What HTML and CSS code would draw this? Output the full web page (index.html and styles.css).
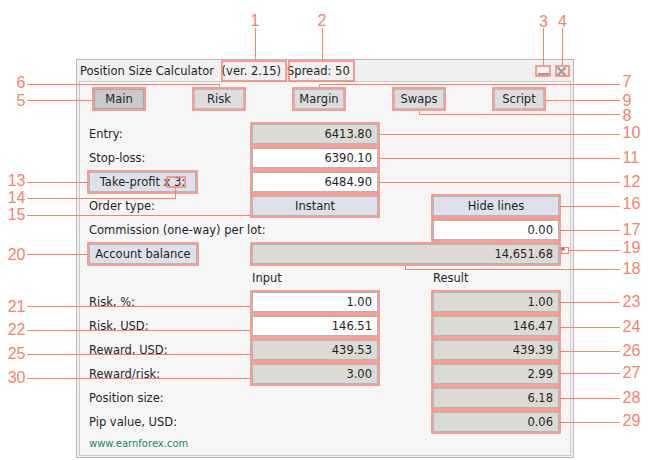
FILE: index.html
```html
<!DOCTYPE html>
<html>
<head>
<meta charset="utf-8">
<title>Position Size Calculator</title>
<link rel="stylesheet" href="styles.css">
</head>
<body>
<div class="window">
  <div class="titlebar">
    <span class="title">Position Size Calculator</span>
    <span class="ver">(ver. 2.15)</span>
    <span class="spread">Spread: 50</span>
    <div class="winbtns">
      <svg class="wicon" width="12" height="13" viewBox="0 0 12 13"><rect class="wglyph" x="1" y="9" width="11" height="2"/></svg>
      <svg class="wicon" width="12" height="13" viewBox="0 0 12 13"><path class="wx" d="M1.5 3.5L9.5 11.5M9.5 3.5L1.5 11.5"/></svg>
    </div>
  </div>
  <div class="panel">
    <div class="tabs">
      <div class="tab active">Main</div>
      <div class="tab">Risk</div>
      <div class="tab">Margin</div>
      <div class="tab">Swaps</div>
      <div class="tab">Script</div>
    </div>
    <div class="form">
      <div class="lbl c1">Entry:</div>
      <div class="fld ro c2">6413.80</div>

      <div class="lbl c1">Stop-loss:</div>
      <div class="fld c2">6390.10</div>

      <div class="btn c1 tp">Take-profit x 3:</div>
      <div class="fld c2">6484.90</div>

      <div class="lbl c1">Order type:</div>
      <div class="btn c2">Instant</div>
      <div class="btn c4">Hide lines</div>

      <div class="lbl c13">Commission (one-way) per lot:</div>
      <div class="fld c4">0.00</div>

      <div class="btn c1 ab">Account balance</div>
      <div class="fld ro c24 bal">14,651.68<span class="star">*</span></div>

      <div class="head c2">Input</div>
      <div class="head c4">Result</div>

      <div class="lbl c1">Risk, %:</div>
      <div class="fld c2">1.00</div>
      <div class="fld ro c4">1.00</div>

      <div class="lbl c1">Risk, USD:</div>
      <div class="fld c2">146.51</div>
      <div class="fld ro c4">146.47</div>

      <div class="lbl c1">Reward, USD:</div>
      <div class="fld ro c2">439.53</div>
      <div class="fld ro c4">439.39</div>

      <div class="lbl c1">Reward/risk:</div>
      <div class="fld ro c2">3.00</div>
      <div class="fld ro c4">2.99</div>

      <div class="lbl c1">Position size:</div>
      <div class="fld ro c4">6.18</div>

      <div class="lbl c1">Pip value, USD:</div>
      <div class="fld ro c4">0.06</div>
    </div>
    <div class="link">www.earnforex.com</div>
  </div>
</div>

<svg class="callouts" width="650" height="460" viewBox="0 0 650 460">
  <g class="boxes">
    <rect x="222" y="61" width="64" height="20"/>
    <rect x="289" y="61" width="65" height="20"/>
    <rect x="536" y="66" width="14" height="10"/>
    <rect x="556" y="66" width="13" height="10"/>
    <rect x="93" y="88" width="52" height="22"/>
    <rect x="193" y="88" width="52" height="22"/>
    <rect x="293" y="88" width="52" height="22"/>
    <rect x="393" y="88" width="52" height="22"/>
    <rect x="493" y="88" width="52" height="22"/>
    <rect x="251" y="123" width="128" height="22"/>
    <rect x="251" y="147" width="128" height="22"/>
    <rect x="251" y="171" width="128" height="22"/>
    <rect x="251" y="195" width="128" height="22"/>
    <rect x="88" y="171" width="109" height="22"/>
    <rect x="167" y="177" width="18" height="10"/>
    <rect x="432" y="195" width="128" height="22"/>
    <rect x="432" y="219" width="128" height="22"/>
    <rect x="251" y="243" width="309" height="22"/>
    <rect class="thin" x="561.5" y="247.5" width="7" height="6"/>
    <rect x="88" y="243" width="110" height="22"/>
    <rect x="251" y="291" width="128" height="22"/>
    <rect x="251" y="315" width="128" height="22"/>
    <rect x="251" y="339" width="128" height="22"/>
    <rect x="251" y="363" width="128" height="22"/>
    <rect x="432" y="291" width="128" height="22"/>
    <rect x="432" y="315" width="128" height="22"/>
    <rect x="432" y="339" width="128" height="22"/>
    <rect x="432" y="363" width="128" height="22"/>
    <rect x="432" y="387" width="128" height="22"/>
    <rect x="432" y="411" width="128" height="22"/>
  </g>
  <g class="leads">
    <path d="M255.5 28V60"/>
    <path d="M322.5 28V60"/>
    <path d="M543.5 28V65"/>
    <path d="M562.5 28V65"/>
    <path d="M27 100.5H92"/>
    <path d="M27 84.5H219.5V87"/>
    <path d="M319.5 87V84.5H620"/>
    <path d="M419.5 111V114.5H620"/>
    <path d="M546 100.5H620"/>
    <path d="M379 134.5H620"/>
    <path d="M379 158.5H620"/>
    <path d="M379 182.5H620"/>
    <path d="M27 182.5H87"/>
    <path d="M175.5 188V198.5H27"/>
    <path d="M27 215.5H250"/>
    <path d="M560 206.5H620"/>
    <path d="M560 230.5H620"/>
    <path d="M405.5 266V269.5H620"/>
    <path d="M569 250.5H620"/>
    <path d="M27 254.5H87"/>
    <path d="M27 306.5H250"/>
    <path d="M27 330.5H250"/>
    <path d="M560 302.5H620"/>
    <path d="M560 327.5H620"/>
    <path d="M27 354.5H250"/>
    <path d="M560 351.5H620"/>
    <path d="M560 373.5H620"/>
    <path d="M560 398.5H620"/>
    <path d="M560 422.5H620"/>
    <path d="M27 378.5H250"/>
  </g>
  <g class="nums">
    <text class="mid" x="255" y="26">1</text>
    <text class="mid" x="322" y="26">2</text>
    <text class="mid" x="543.5" y="26.5">3</text>
    <text class="mid" x="562.5" y="26.5">4</text>
    <text class="end" x="25.5" y="106">5</text>
    <text class="end" x="25.5" y="88">6</text>
    <text class="end" x="25.5" y="186">13</text>
    <text class="end" x="25.5" y="203">14</text>
    <text class="end" x="25.5" y="220">15</text>
    <text class="end" x="25.5" y="259.5">20</text>
    <text class="end" x="25.5" y="311.5">21</text>
    <text class="end" x="25.5" y="334.5">22</text>
    <text class="end" x="25.5" y="359">25</text>
    <text class="end" x="25.5" y="383">30</text>
    <text x="622.5" y="86.5">7</text>
    <text x="622.5" y="105.5">9</text>
    <text x="622.5" y="120.5">8</text>
    <text x="622.5" y="138">10</text>
    <text x="622.5" y="163">11</text>
    <text x="622.5" y="187">12</text>
    <text x="622.5" y="209">16</text>
    <text x="622.5" y="234.5">17</text>
    <text x="622.5" y="253">19</text>
    <text x="622.5" y="274">18</text>
    <text x="622.5" y="307">23</text>
    <text x="622.5" y="332">24</text>
    <text x="622.5" y="356">26</text>
    <text x="622.5" y="378">27</text>
    <text x="622.5" y="403">28</text>
    <text x="622.5" y="426">29</text>
  </g>
</svg>
</body>
</html>
```

FILE: styles.css
```css
* {
  box-sizing: border-box;
}

html, body {
  margin: 0;
  background: #ffffff;
}

body {
  padding: 59px 0 0 76px;
  width: 650px;
  height: 460px;
  overflow: hidden;
  font-family: "DejaVu Sans", "Noto Sans", sans-serif;
  font-size: 11.5px;
  color: #1f1f2b;
}

.window {
  width: 498px;
  height: 399px;
  border: 1px solid #b8b8b8;
  background: #f0f0f0;
  padding: 0 2px 1px 2px;
  display: flex;
  flex-direction: column;
}

.titlebar {
  height: 21px;
  flex: none;
  display: flex;
  align-items: center;
  padding-left: 1px;
  white-space: nowrap;
}

.ver {
  margin-left: 7.5px;
}

.spread {
  margin-left: 6px;
}

.winbtns {
  margin-left: auto;
  margin-right: 3px;
  display: flex;
  gap: 7px;
}

.wicon {
  display: block;
}

.wglyph {
  fill: #9c9c9c;
}

.wx {
  stroke: #9c9c9c;
  stroke-width: 2.4;
  fill: none;
}

.panel {
  flex: 1;
  border: 1px solid #cacaca;
  background: #f6f6f6;
  padding-top: 7px;
}

.tabs {
  display: flex;
  gap: 50px;
  padding-left: 14px;
}

.tab {
  width: 50px;
  height: 20px;
  border: 1px solid #b6bdc7;
  background: #dddddd;
  text-align: center;
  line-height: 18px;
}

.tab.active {
  background: #c9c9c9;
  border-color: #a3a9b1;
}

.form {
  display: grid;
  grid-template-columns: 163px 126px 55px 126px;
  grid-auto-rows: 20px;
  row-gap: 4px;
  margin-top: 15px;
  padding-left: 9px;
}

.c1 { grid-column: 1; }
.c2 { grid-column: 2; }
.c4 { grid-column: 4; }
.c13 { grid-column: 1 / span 3; }
.c24 { grid-column: 2 / span 3; }

.lbl, .head {
  line-height: 20px;
  white-space: nowrap;
}

.fld {
  border: 1px solid #aab7c7;
  background: #ffffff;
  text-align: right;
  padding-right: 5px;
  line-height: 18px;
  white-space: nowrap;
}

.fld.ro {
  background: #dcdbd3;
}

.btn {
  border: 1px solid #aab7c7;
  background: #dee1e9;
  text-align: center;
  line-height: 18px;
  white-space: nowrap;
}

.btn.tp {
  width: 107px;
}

.btn.ab {
  width: 108px;
}

.bal {
  position: relative;
}

.star {
  position: absolute;
  left: calc(100% + 3px);
  top: 3px;
  font-size: 8px;
  line-height: 8px;
  color: #333333;
}

.link {
  margin-top: 5px;
  padding-left: 9px;
  font-size: 10px;
  line-height: 14px;
  color: #17876a;
}

.callouts {
  position: absolute;
  left: 0;
  top: 0;
  pointer-events: none;
}

.boxes rect {
  fill: none;
  stroke: #f9806e;
  stroke-width: 1.5;
}

.boxes rect.thin {
  stroke-width: 1;
}

.leads path {
  fill: none;
  stroke: #f9806e;
  stroke-width: 1;
}

.nums text {
  fill: #f9806e;
  font-family: "Liberation Sans", Arial, sans-serif;
  font-size: 16px;
}

.nums text.mid {
  text-anchor: middle;
}

.nums text.end {
  text-anchor: end;
}
```
